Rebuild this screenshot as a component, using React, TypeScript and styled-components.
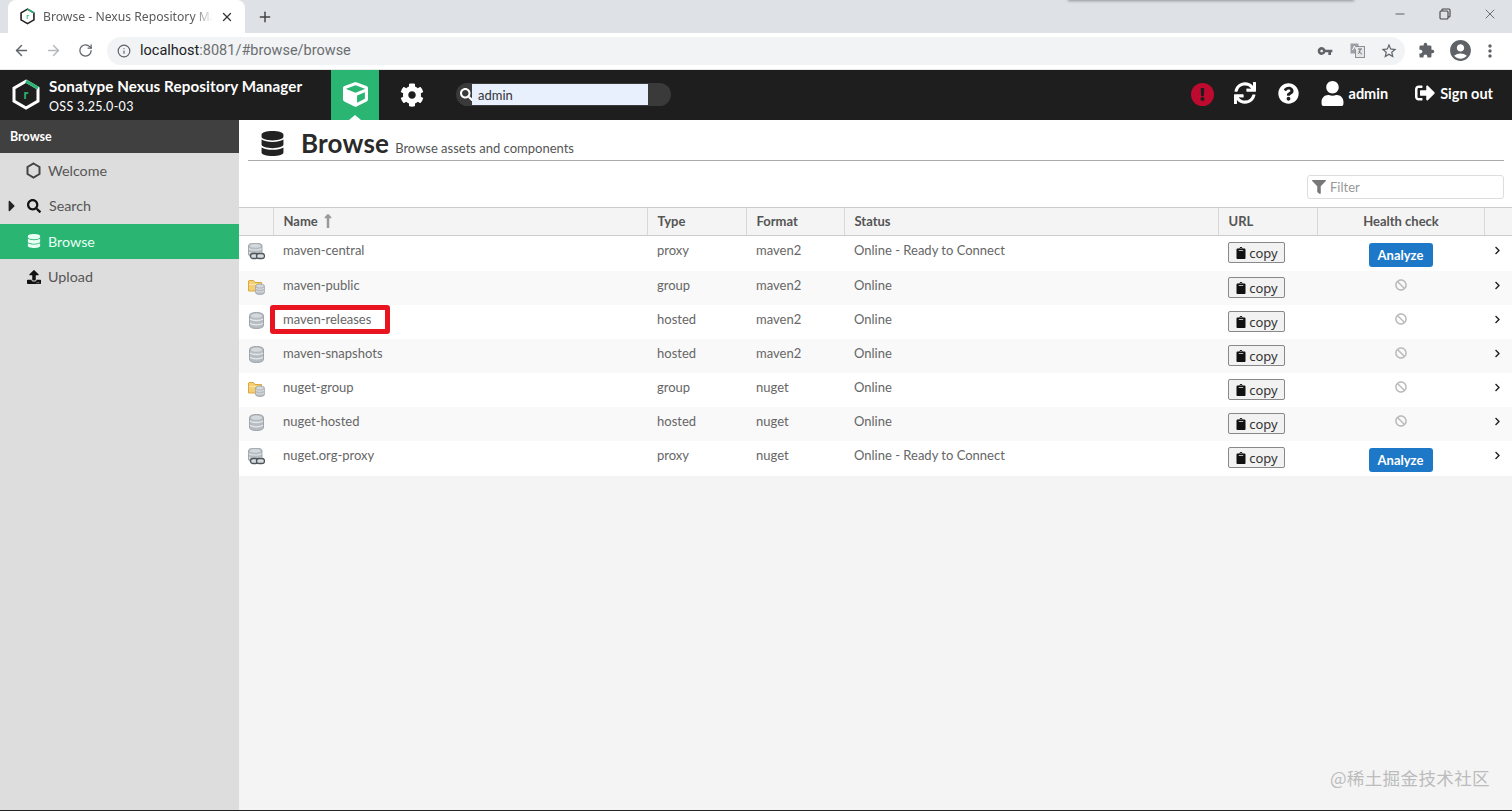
import React from "react";
import styled, { createGlobalStyle } from "styled-components";
import {
  FaCube, FaCog, FaSearch, FaSync, FaQuestionCircle, FaUser, FaSignOutAlt, FaExclamation,
  FaDatabase, FaUpload, FaClipboard, FaBan, FaChevronRight, FaFilter, FaLongArrowAltUp, FaCaretRight,
} from "react-icons/fa";
import { MdVpnKey, MdStarBorder, MdExtension, MdAccountCircle, MdMoreVert } from "react-icons/md";
import { ArrowLeft, ArrowRight, RotateCw, Info, X, Plus, Minus } from "lucide-react";

const Global = createGlobalStyle`
  html, body { margin: 0; padding: 0; height: 100%; overflow: hidden; }
  body { font-family: Lato, "Noto Sans", sans-serif; background: #f4f4f4; color: #444; }
  * { box-sizing: border-box; }
`;

const GRID = "34px 374px 99px 98px 374px 99px 167px 1fr";

const Page = styled.div`
  width: 1512px; height: 811px; display: flex; flex-direction: column;
  position: relative; overflow: hidden; border-bottom: 1px solid #222;
`;
const TabStrip = styled.div`
  height: 33px; background: #dee1e6; display: flex; align-items: flex-end; padding-left: 8px; flex: none; position: relative;
`;
const WindowShadow = styled.div`
  position: absolute; left: 1068px; top: -3px; width: 286px; height: 4px; background: #8f9296; filter: blur(1.5px);
`;
const Tab = styled.div`
  width: 237px; height: 33px; background: #fff; border-radius: 8px 8px 0 0; display: flex; align-items: center;
  padding-left: 12px; gap: 8px; position: relative;
`;
const TabTitle = styled.span`
  font: 12.2px "Noto Sans", sans-serif; color: #5a5a5a; white-space: nowrap; width: 170px; overflow: hidden;
  -webkit-mask-image: linear-gradient(90deg, #000 150px, transparent 170px);
  mask-image: linear-gradient(90deg, #000 150px, transparent 170px);
`;
const TabClose = styled.span`display: flex; color: #333; margin-left: -1px;`;
const NewTab = styled.span`display: flex; color: #444; margin: 0 0 8px 12px;`;
const WindowButtons = styled.div`
  margin-left: auto; height: 28px; align-self: flex-start; display: flex; align-items: center; gap: 29px; padding-right: 14px; color: #444;
`;
const WinBtn = styled.span`display: flex; width: 16px; justify-content: center;`;
const Toolbar = styled.div`
  height: 36.5px; background: #fff; display: flex; align-items: center; padding: 0 0 0 11px; flex: none; border-bottom: 1px solid #e8e8e8;
`;
const NavBtn = styled.span<{ $w?: number; $c?: string }>`
  display: flex; width: ${p => p.$w ?? 32}px; justify-content: center; color: ${p => p.$c ?? "#5f6368"};
`;
const Omnibox = styled.div`
  width: 1298px; height: 28px; margin-left: 12px; border-radius: 14px; background: #f1f3f4; display: flex; align-items: center; padding: 0 0 0 10px;
`;
const Url = styled.span`
  font: 14.5px Roboto, sans-serif; color: #6b6e72; margin-left: 9px; flex: 1;
  b { font-weight: 400; color: #202124; }
`;
const OmniIcon = styled.span`display: flex; width: 32px; justify-content: center; color: #5f6368;`;
const Header = styled.div`
  height: 50px; background: #1e1e1e; display: flex; align-items: center; flex: none; color: #fff; padding-left: 12px;
`;
const Brand = styled.div`display: flex; flex-direction: column; margin-left: 9px; width: 282px; gap: 3px; padding-top: 1px;`;
const BrandName = styled.span`font-size: 15.2px; font-weight: 700; line-height: 19px; white-space: nowrap; letter-spacing: .1px;`;
const BrandVersion = styled.span`font-size: 12.5px; line-height: 15px; letter-spacing: .3px;`;
const GreenTab = styled.div`
  width: 48px; height: 50px; background: #2ab573; display: flex; align-items: center; justify-content: center; position: relative;
  &::after { content: ""; position: absolute; left: 18px; bottom: 0; border: 6px solid transparent; border-top: 0; border-bottom: 5px solid #fff; }
`;
const HeadIcon = styled.span`display: flex; width: 66px; justify-content: center;`;
const SearchPill = styled.div`
  width: 215px; height: 23px; margin-left: 11px; background: #3a3a3a; border-radius: 12px; display: flex; align-items: center; padding-left: 4px;
`;
const SearchField = styled.div`
  width: 176px; height: 21px; background: #e8f0fe; color: #333; font-size: 13px; line-height: 22px; padding-left: 6px; margin-left: -1px;
`;
const HeaderRight = styled.div`margin-left: auto; display: flex; align-items: center; padding: 0 19px 3px 0;`;
const Alert = styled.span`
  width: 23px; height: 23px; border-radius: 50%; background: #bf0a30; color: #1e1e1e; display: flex; align-items: center; justify-content: center; margin-top: 2px;
`;
const HeadLabel = styled.span`font-size: 14.5px; font-weight: 700; white-space: nowrap;`;
const Slot = styled.span<{ $l: number }>`display: flex; margin-left: ${p => p.$l}px;`;
const Body = styled.div`flex: 1; display: flex; min-height: 0;`;
const Sidebar = styled.div`width: 239px; background: #ddd; flex: none; display: flex; flex-direction: column;`;
const SideTitle = styled.div`
  height: 33px; background: #404040; color: #fff; font-size: 12.5px; font-weight: 700; line-height: 33px; padding-left: 10px;
`;
const SideItem = styled.div<{ $active?: boolean }>`
  height: 35.5px; display: flex; align-items: center; position: relative; padding-left: 26px; gap: 7px; font-size: 14.3px;
  background: ${p => (p.$active ? "#2ab573" : "transparent")}; color: ${p => (p.$active ? "#e8fff3" : "#555")};
`;
const SideIcon = styled.span<{ $c?: string }>`display: flex; width: 15px; justify-content: center; color: ${p => p.$c ?? "#111"};`;
const SearchLabel = styled.span`margin-left: 1px;`;
const Caret = styled.span`position: absolute; left: 3px; display: flex; color: #222;`;
const Main = styled.div`flex: 1; display: flex; flex-direction: column; min-width: 0; background: #f4f4f4;`;
const Intro = styled.div`background: #fff; height: 87px; padding: 0 8px 0 9px; display: flex; flex-direction: column; flex: none;`;
const TitleRow = styled.div`
  height: 41.5px; display: flex; align-items: center; border-bottom: 1.5px solid #aaa; padding: 7px 0 0 12px; color: #222;
`;
const PageTitle = styled.span`font-size: 26px; font-weight: 700; margin-left: 16px; color: #2a2a2a; letter-spacing: .2px;`;
const PageSub = styled.span`font-size: 13px; color: #555; margin: 9px 0 0 6px;`;
const FilterBox = styled.div`
  width: 197px; height: 24px; margin: 14px 0 0 auto; background: #fff; border: 1px solid #ddd; border-radius: 3px;
  display: flex; align-items: center; gap: 4px; padding-left: 4px; color: #777; font-size: 13px;
`;
const FilterText = styled.span`color: #999;`;
const HeadRow = styled.div`
  display: grid; grid-template-columns: ${GRID}; height: 29.5px; border-top: 1px solid #ccc; border-bottom: 1px solid #ccc; background: #f4f4f4; flex: none;
`;
const HeadCell = styled.div<{ $center?: boolean }>`
  display: flex; align-items: center; gap: 2px; font-size: 13px; font-weight: 700; color: #555;
  padding-left: ${p => (p.$center ? 0 : 9.5)}px; border-left: 1px solid #d8d8d8;
  justify-content: ${p => (p.$center ? "center" : "flex-start")};
  &:first-child { border-left: 0; }
`;
const Row = styled.div<{ $alt?: boolean; $h: number }>`
  display: grid; grid-template-columns: ${GRID}; height: ${p => p.$h}px; background: ${p => (p.$alt ? "#f9f9f9" : "#fff")}; flex: none;
`;
const Cell = styled.div`
  font-size: 13px; color: #666; padding: 7px 0 0 10px; line-height: 15px; white-space: nowrap; position: relative;
`;
const NameCell = styled(Cell)`z-index: 1;`;
const IconCell = styled.div`padding: 7px 0 0 9px;`;
const ActionCell = styled.div`padding: 6px 0 0 10px;`;
const HealthCell = styled.div`display: flex; justify-content: center; align-items: flex-start; padding-top: 7px; color: #bbb;`;
const BanIcon = styled.span`display: flex; margin-top: 1px;`;
const ArrowCell = styled.div`padding: 10px 0 0 9px; color: #222; display: flex;`;
const CopyButton = styled.div`
  width: 57px; height: 21px; border: 1px solid #888; border-radius: 2px; background: #f2f2f2; color: #333;
  display: flex; align-items: center; justify-content: center; gap: 2px; font: 13px "Noto Sans", sans-serif;
`;
const Analyze = styled.div`
  width: 64px; height: 24px; border-radius: 3px; background: #1e78c8; color: #fff; font-size: 13px; font-weight: 700;
  display: flex; align-items: center; justify-content: center;
`;
const RedMark = styled.span`
  position: absolute; left: -3px; top: 0; width: 120px; height: 29px; border: 5px solid #e8141f; border-radius: 3px; background: #fff;
`;
const NameText = styled.span`position: relative;`;
const Watermark = styled.span`
  position: absolute; right: 22px; bottom: 20px; color: #bcbcbc; font: 17.6px "Noto Sans CJK SC", sans-serif; letter-spacing: .3px;
`;

const Hexagon = ({ size, color, letter }: { size: number; color: string; letter: string }) => (
  <svg width={size} height={size * 1.08} viewBox="0 0 28 30" style={{ flex: "none" }}>
    <path d="M14 2 26 9v13l-12 7-12-7V9z" fill="none" stroke={color} strokeWidth="3" />
    <path d="M14 2 26 9" fill="none" stroke="#2ab573" strokeWidth="3" />
    <text x="14" y="20" textAnchor="middle" fontSize="13" fontWeight="700" fill="#2ab573" fontFamily="Lato, sans-serif">{letter}</text>
  </svg>
);

const Db = ({ x = 0, y = 0, w = 14, h = 15 }: { x?: number; y?: number; w?: number; h?: number }) => (
  <g transform={`translate(${x} ${y}) scale(${w / 14} ${h / 15})`}>
    <path d="M0 3C0 1 3 0 7 0s7 1 7 3v9c0 2-3 3-7 3s-7-1-7-3z" fill="#b6bcc2" stroke="#8f969c" strokeWidth=".8" />
    <path d="M.5 6c2 2 11 2 13 0M.5 10c2 2 11 2 13 0" fill="none" stroke="#e6e9eb" strokeWidth="1.2" />
    <ellipse cx="7" cy="3" rx="5.5" ry="2" fill="#d5d9dc" />
  </g>
);

const RepoIcon = ({ kind }: { kind: string }) => (
  <svg width="17" height="17" viewBox="0 0 17 17">
    {kind === "proxy" && (
      <>
        <Db x={0.500} y={0} w={13.500} h={14} />
        <rect x="2.500" y="10.500" width="7.500" height="5" rx="2.500" fill="#d8dbde" stroke="#4e555a" strokeWidth="1.300" />
        <rect x="8.500" y="10.500" width="8" height="5" rx="2.500" fill="#d8dbde" stroke="#4e555a" strokeWidth="1.300" />
      </>
    )}
    {kind === "group" && (
      <>
        <path d="M.5 3V13h13V4.5H7L5.5 2.500H1z" fill="#f4cf75" stroke="#dca83d" />
        <path d="M1 6.500h12" stroke="#fbe7af" />
        <Db x={7.500} y={6} w={9} h={10.500} />
      </>
    )}
    {kind === "hosted" && <Db x={1.500} y={0.500} w={14} h={16} />}
  </svg>
);

const rows = [
  { name: "maven-central", type: "proxy", format: "maven2", status: "Online - Ready to Connect", analyze: true, h: 35 },
  { name: "maven-public", type: "group", format: "maven2", status: "Online", h: 34, alt: true },
  { name: "maven-releases", type: "hosted", format: "maven2", status: "Online", h: 34, mark: true },
  { name: "maven-snapshots", type: "hosted", format: "maven2", status: "Online", h: 34, alt: true },
  { name: "nuget-group", type: "group", format: "nuget", status: "Online", h: 34 },
  { name: "nuget-hosted", type: "hosted", format: "nuget", status: "Online", h: 34, alt: true },
  { name: "nuget.org-proxy", type: "proxy", format: "nuget", status: "Online - Ready to Connect", analyze: true, h: 35 },
];

export default function App() {
  return (
    <Page>
      <Global />
      <TabStrip>
        <WindowShadow />
        <Tab>
          <Hexagon size={15} color="#222" letter="r" />
          <TabTitle>Browse - Nexus Repository Manager</TabTitle>
          <TabClose><X size={14} strokeWidth={2.2} /></TabClose>
        </Tab>
        <NewTab><Plus size={16} strokeWidth={2.2} /></NewTab>
        <WindowButtons>
          <WinBtn><Minus size={14} strokeWidth={1.4} /></WinBtn>
          <WinBtn>
            <svg width="12" height="12" viewBox="0 0 12 12" fill="none" stroke="#444" strokeWidth="1.100">
              <rect x="1" y="3" width="8" height="8" rx="1" />
              <path d="M3 3V1.500C3 1 3.500 1 4 1h6c.6 0 1 .4 1 1v6c0 .5-.4 1-1 1H9" />
            </svg>
          </WinBtn>
          <WinBtn><X size={18} strokeWidth={1.1} /></WinBtn>
        </WindowButtons>
      </TabStrip>
      <Toolbar>
        <NavBtn $w={20}><ArrowLeft size={17} /></NavBtn>
        <NavBtn $w={44} $c="#b4b7bb"><ArrowRight size={17} /></NavBtn>
        <NavBtn $w={20}><RotateCw size={15} /></NavBtn>
        <Omnibox>
          <NavBtn $w={14}><Info size={14} /></NavBtn>
          <Url><b>localhost</b>:8081/#browse/browse</Url>
          <OmniIcon><MdVpnKey size={16} /></OmniIcon>
          <OmniIcon>
            <svg width="15" height="15" viewBox="0 0 15 15">
              <rect x="0.500" y="0.500" width="8" height="10" fill="#9aa0a6" />
              <rect x="5.500" y="3.500" width="9" height="11" fill="#e4e6e8" stroke="#8b9095" />
              <path d="M8 6h4M10 6v1c0 2-1 3-2 4M9 8c.6 1.500 2 3 3 3" stroke="#6c7075" fill="none" />
              <path d="M2.500 7l2-4 2 4" stroke="#fff" fill="none" />
            </svg>
          </OmniIcon>
          <OmniIcon><MdStarBorder size={18} /></OmniIcon>
        </Omnibox>
        <NavBtn $w={42}><MdExtension size={17} /></NavBtn>
        <NavBtn $w={26}><MdAccountCircle size={25} /></NavBtn>
        <NavBtn $w={34}><MdMoreVert size={20} /></NavBtn>
      </Toolbar>
      <Header>
        <Hexagon size={28} color="#fff" letter="r" />
        <Brand>
          <BrandName>Sonatype Nexus Repository Manager</BrandName>
          <BrandVersion>OSS 3.25.0-03</BrandVersion>
        </Brand>
        <GreenTab><FaCube size={25} /></GreenTab>
        <HeadIcon><FaCog size={24} /></HeadIcon>
        <SearchPill>
          <FaSearch size={13} color="#fff" />
          <SearchField>admin</SearchField>
        </SearchPill>
        <HeaderRight>
          <Alert><FaExclamation size={13} /></Alert>
          <Slot $l={20}><FaSync size={22} /></Slot>
          <Slot $l={22}><FaQuestionCircle size={21} /></Slot>
          <Slot $l={21}><FaUser size={25} /></Slot>
          <Slot $l={4}><HeadLabel>admin</HeadLabel></Slot>
          <Slot $l={27}><FaSignOutAlt size={20} /></Slot>
          <Slot $l={5}><HeadLabel>Sign out</HeadLabel></Slot>
        </HeaderRight>
      </Header>
      <Body>
        <Sidebar>
          <SideTitle>Browse</SideTitle>
          <SideItem>
            <SideIcon $c="#444">
              <svg width="15" height="17" viewBox="0 0 15 17" fill="none" stroke="#444" strokeWidth="2">
                <path d="M7.500 1.500 13.500 5v7l-6 3.500L1.500 12V5z" />
              </svg>
            </SideIcon>
            Welcome
          </SideItem>
          <SideItem>
            <Caret><FaCaretRight size={18} /></Caret>
            <SideIcon><FaSearch size={14} /></SideIcon>
            <SearchLabel>Search</SearchLabel>
          </SideItem>
          <SideItem $active>
            <SideIcon $c="#e8fff3"><FaDatabase size={14} /></SideIcon>
            Browse
          </SideItem>
          <SideItem>
            <SideIcon><FaUpload size={14} /></SideIcon>
            Upload
          </SideItem>
        </Sidebar>
        <Main>
          <Intro>
            <TitleRow>
              <FaDatabase size={25} />
              <PageTitle>Browse</PageTitle>
              <PageSub>Browse assets and components</PageSub>
            </TitleRow>
            <FilterBox>
              <FaFilter size={14} color="#777" />
              <FilterText>Filter</FilterText>
            </FilterBox>
          </Intro>
          <HeadRow>
            <HeadCell />
            <HeadCell>Name <FaLongArrowAltUp size={16} color="#999" /></HeadCell>
            <HeadCell>Type</HeadCell>
            <HeadCell>Format</HeadCell>
            <HeadCell>Status</HeadCell>
            <HeadCell>URL</HeadCell>
            <HeadCell $center>Health check</HeadCell>
            <HeadCell />
          </HeadRow>
          {rows.map(r => (
            <Row key={r.name} $alt={r.alt} $h={r.h}>
              <IconCell><RepoIcon kind={r.type} /></IconCell>
              <NameCell>
                {r.mark && <RedMark />}
                <NameText>{r.name}</NameText>
              </NameCell>
              <Cell>{r.type}</Cell>
              <Cell>{r.format}</Cell>
              <Cell>{r.status}</Cell>
              <ActionCell>
                <CopyButton><FaClipboard size={12} color="#111" />copy</CopyButton>
              </ActionCell>
              <HealthCell>
                {r.analyze ? <Analyze>Analyze</Analyze> : <BanIcon><FaBan size={12} /></BanIcon>}
              </HealthCell>
              <ArrowCell><FaChevronRight size={9} /></ArrowCell>
            </Row>
          ))}
        </Main>
      </Body>
      <Watermark>@稀土掘金技术社区</Watermark>
    </Page>
  );
}
